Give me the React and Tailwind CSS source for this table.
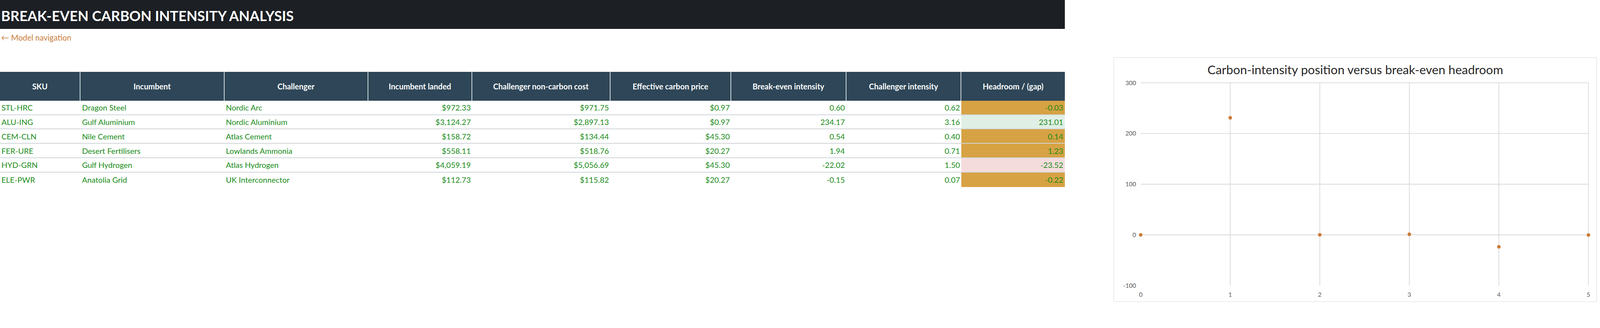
import React from 'react';

const rows = [
  { sku: 'STL-HRC', inc: 'Dragon Steel', chal: 'Nordic Arc', landed: '$972.33', nonCarbon: '$971.75', price: '$0.97', breakEven: '0.60', intensity: '0.62', headroom: '-0.03', tone: 'gold' },
  { sku: 'ALU-ING', inc: 'Gulf Aluminium', chal: 'Nordic Aluminium', landed: '$3,124.27', nonCarbon: '$2,897.13', price: '$0.97', breakEven: '234.17', intensity: '3.16', headroom: '231.01', tone: 'green' },
  { sku: 'CEM-CLN', inc: 'Nile Cement', chal: 'Atlas Cement', landed: '$158.72', nonCarbon: '$134.44', price: '$45.30', breakEven: '0.54', intensity: '0.40', headroom: '0.14', tone: 'gold' },
  { sku: 'FER-URE', inc: 'Desert Fertilisers', chal: 'Lowlands Ammonia', landed: '$558.11', nonCarbon: '$518.76', price: '$20.27', breakEven: '1.94', intensity: '0.71', headroom: '1.23', tone: 'gold' },
  { sku: 'HYD-GRN', inc: 'Gulf Hydrogen', chal: 'Atlas Hydrogen', landed: '$4,059.19', nonCarbon: '$5,056.69', price: '$45.30', breakEven: '-22.02', intensity: '1.50', headroom: '-23.52', tone: 'pink' },
  { sku: 'ELE-PWR', inc: 'Anatolia Grid', chal: 'UK Interconnector', landed: '$112.73', nonCarbon: '$115.82', price: '$20.27', breakEven: '-0.15', intensity: '0.07', headroom: '-0.22', tone: 'gold' },
];

const headers = [
  'SKU',
  'Incumbent',
  'Challenger',
  'Incumbent landed',
  'Challenger non-carbon cost',
  'Effective carbon price',
  'Break-even intensity',
  'Challenger intensity',
  'Headroom / (gap)',
];

const toneClass = {
  gold: 'bg-[#d6a243]',
  green: 'bg-[#e0efe5]',
  pink: 'bg-[#f4dcdc]',
};

const gridCols =
  'grid grid-cols-[206.3px_368.3px_368.3px_266.1px_353.6px_309.4px_294.7px_294.7px_264.3px]';

// scatter: x = SKU index, y = headroom
const points = [-0.03, 231.01, 0.14, 1.23, -23.52, -0.22];

const Chart = () => {
  const x0 = 74;
  const step = 249;
  const yZero = 440.5;
  const perUnit = 1.41;
  const yOf = (v) => yZero - v * perUnit;

  return (
    <div className="w-[1237.6px] h-[626px] mt-[147.3px] shrink-0 border border-[#d9d9d9] bg-white flex flex-col">
      <div className="pt-[12.9px] h-[47.4px] shrink-0 text-center text-[31.5px] leading-[34.5px] text-[#262626]">
        Carbon-intensity position versus break-even headroom
      </div>
      <svg width="1235.6" height="576.6" viewBox="0 0 1342 626.3" className="block">
        {[300, 200, 100, 0].map((v) => (
          <line key={v} x1={x0} x2={x0 + step * 5} y1={yOf(v)} y2={yOf(v)} stroke="#d9d9d9" strokeWidth="2" />
        ))}
        {[1, 2, 3, 4, 5].map((i) => (
          <line key={i} x1={x0 + step * i} x2={x0 + step * i} y1={yOf(300)} y2={yOf(-100)} stroke="#d9d9d9" strokeWidth="2" />
        ))}
        {[300, 200, 100, 0, -100].map((v) => (
          <text key={v} x="61" y={yOf(v) + 6} textAnchor="end" fontSize="17" fill="#595959" fontFamily="Lato, sans-serif">
            {v}
          </text>
        ))}
        {[0, 1, 2, 3, 4, 5].map((i) => (
          <text key={i} x={x0 + step * i} y="613" textAnchor="middle" fontSize="17" fill="#595959" fontFamily="Lato, sans-serif">
            {i}
          </text>
        ))}
        {points.map((v, i) => (
          <circle key={i} cx={x0 + step * i} cy={yOf(v)} r="5" fill="#cc7b36" />
        ))}
      </svg>
    </div>
  );
};

export default function App() {
  return (
    <div className="flex gap-[125.2px] bg-white font-['Lato','Liberation_Sans',sans-serif] w-full h-[773px] overflow-hidden">
      <div className="w-[2725.6px] shrink-0 flex flex-col">
        <div className="h-[73.7px] bg-[#1c1f24] pt-[17.5px] pl-[2.8px]">
          <h1 className="text-[36px] leading-[44px] font-bold text-white">BREAK-EVEN CARBON INTENSITY ANALYSIS</h1>
        </div>
        <a href="#" className="mt-[10.3px] pl-[2.8px] text-[20.3px] leading-[24px] text-[#c97d3d]">
          ← Model navigation
        </a>

        <div className="mt-[76.2px]">
          <div className={`${gridCols} h-[73.7px] bg-[#2e4657]`}>
            {headers.map((h, i) => (
              <div
                key={h}
                className={`flex items-center justify-center text-[20px] font-bold text-white ${
                  i < headers.length - 1 ? 'border-r-2 border-[#cfd8de]' : ''
                }`}
              >
                {h}
              </div>
            ))}
          </div>
          {rows.map((r, idx) => (
            <div
              key={r.sku}
              className={`${gridCols} h-[36.8px] text-[20px] text-[#1a8c1a] ${
                idx < rows.length - 1 ? 'border-b-2 border-[#d0d5d9]' : ''
              }`}
            >
              <div className="flex items-center px-[3.7px]">{r.sku}</div>
              <div className="flex items-center px-[3.7px]">{r.inc}</div>
              <div className="flex items-center px-[3.7px]">{r.chal}</div>
              <div className="flex items-center justify-end px-[3.7px]">{r.landed}</div>
              <div className="flex items-center justify-end px-[3.7px]">{r.nonCarbon}</div>
              <div className="flex items-center justify-end px-[3.7px]">{r.price}</div>
              <div className="flex items-center justify-end px-[3.7px]">{r.breakEven}</div>
              <div className="flex items-center justify-end px-[3.7px]">{r.intensity}</div>
              <div className={`flex items-center justify-end px-[3.7px] ${toneClass[r.tone]}`}>{r.headroom}</div>
            </div>
          ))}
        </div>
      </div>

      <Chart />
    </div>
  );
}
